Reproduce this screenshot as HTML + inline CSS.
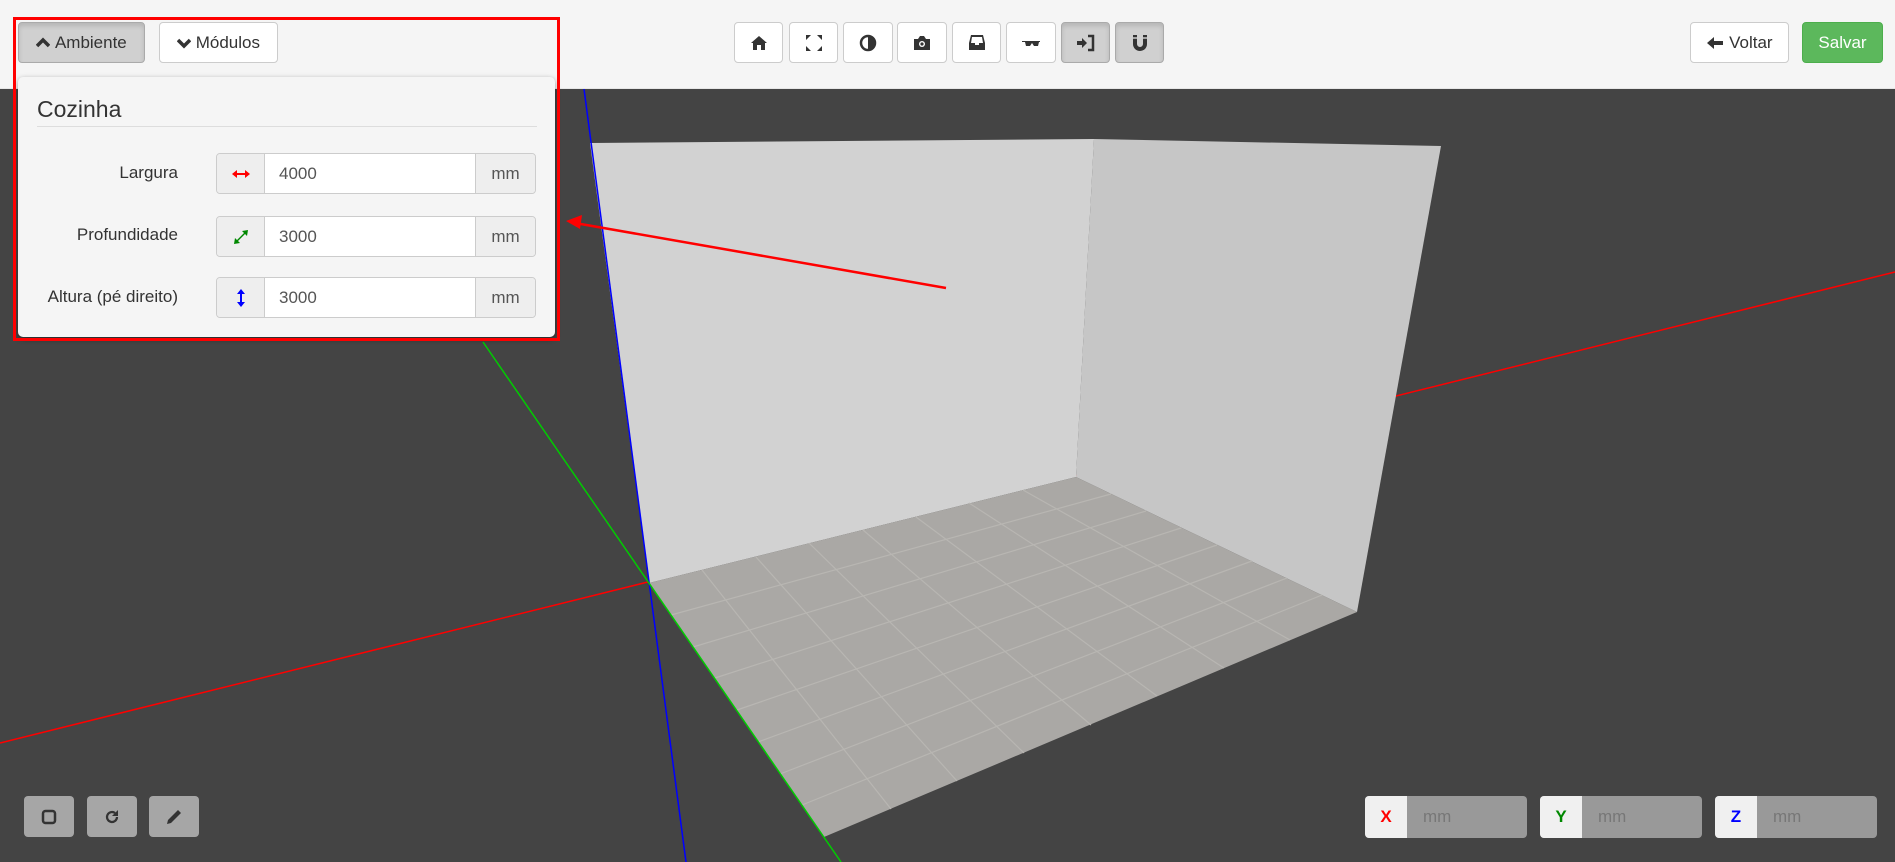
<!DOCTYPE html>
<html><head><meta charset="utf-8"><style>
*{box-sizing:border-box;margin:0;padding:0}
body{width:1895px;height:862px;overflow:hidden;background:#444;font-family:"Liberation Sans",sans-serif;position:relative;color:#333}
.hdr{position:absolute;left:0;top:0;width:1895px;height:89px;background:#f5f5f5;border-bottom:1px solid #e6e6e6}
.btn{position:absolute;top:22px;height:41px;border:1px solid #ccc;border-radius:4px;background:#fff;display:flex;align-items:center;justify-content:center;font-size:17px;color:#333}
.act{background:#d0d0d0;border-color:#aaa;box-shadow:inset 0 3px 5px rgba(0,0,0,.125)}
.panel{position:absolute;left:18px;top:77px;width:537px;height:260px;background:#f5f5f5;border-radius:5px;box-shadow:0 2px 6px rgba(0,0,0,.4)}
.lbl{position:absolute;right:377px;font-size:17px;color:#333;text-align:right;white-space:nowrap}
.grp{position:absolute;left:198px;width:320px;height:41px;border:1px solid #ccc;border-radius:4px;display:flex;overflow:hidden}
.ad{width:48px;background:#eee;border-right:1px solid #ccc;display:flex;align-items:center;justify-content:center}
.inp{flex:1;background:#fff;font-size:17px;color:#555;padding-left:14px;display:flex;align-items:center}
.mm{width:60px;background:#eee;border-left:1px solid #ccc;display:flex;align-items:center;justify-content:center;font-size:17px;color:#555}
.bb{position:absolute;top:796px;width:50px;height:41px;background:#a6a6a6;border-radius:4px;display:flex;align-items:center;justify-content:center}
.cg{position:absolute;top:796px;width:162px;height:42px;border-radius:4px;background:#999;display:flex;overflow:hidden}
.cg .l{width:42px;background:#f0f0f0;display:flex;align-items:center;justify-content:center;font-weight:bold;font-size:17px}
.cg .r{flex:1;color:#777;font-size:17px;padding-left:16px;display:flex;align-items:center}
</style></head><body>
<svg width="1895" height="862" style="position:absolute;left:0;top:0">
<line x1="0" y1="743" x2="1895" y2="272" stroke="#f00" stroke-width="1.5"/>
<polygon points="590,143 1094,139 1076,477 649,583" fill="#d2d2d2"/>
<polygon points="1094,139 1441,146 1357,612 1076,477" fill="#c6c6c6"/>
<polygon points="649,583 1076,477 1357,612 824,837" fill="#aaa8a5"/>
<g stroke="#b8b6b2" stroke-width="1.2">
<line x1="671" y1="615" x2="1111" y2="494"/><line x1="693" y1="647" x2="1146" y2="511"/><line x1="715" y1="678" x2="1181" y2="528"/><line x1="737" y1="710" x2="1217" y2="545"/><line x1="758" y1="742" x2="1252" y2="561"/><line x1="780" y1="774" x2="1287" y2="578"/><line x1="802" y1="805" x2="1322" y2="595"/>
<line x1="702" y1="570" x2="891" y2="809"/><line x1="756" y1="557" x2="957" y2="781"/><line x1="809" y1="543" x2="1024" y2="753"/><line x1="863" y1="530" x2="1091" y2="725"/><line x1="916" y1="517" x2="1157" y2="696"/><line x1="969" y1="503" x2="1224" y2="668"/><line x1="1023" y1="490" x2="1290" y2="640"/>
</g>
<line x1="584" y1="89" x2="686" y2="862" stroke="#00f" stroke-width="1.5"/>
<line x1="483" y1="342" x2="841" y2="862" stroke="#0c0" stroke-width="1.5"/>
<line x1="946" y1="288" x2="575" y2="223" stroke="#f00" stroke-width="2.5"/>
<polygon points="566,221 582,215 580,229" fill="#f00"/>
</svg>
<div class="hdr"></div>
<div class="btn act" style="left:18px;width:127px"><svg width="14" height="12" viewBox="0 0 14 12"><path d="M1 9 7 3 13 9" stroke="#333" stroke-width="3.5" fill="none"/></svg>&nbsp;Ambiente</div>
<div class="btn" style="left:159px;width:119px"><svg width="14" height="12" viewBox="0 0 14 12"><path d="M1 3 7 9 13 3" stroke="#333" stroke-width="3.5" fill="none"/></svg>&nbsp;Módulos</div>
<div class="btn" style="left:734px;width:49px"><svg width="18" height="16" viewBox="0 0 18 16"><path d="M9 1 1 8h2v7h4v-5h4v5h4V8h2z" fill="#333"/></svg></div>
<div class="btn" style="left:789px;width:49px"><svg width="18" height="18" viewBox="0 0 18 18" fill="#333"><path d="M1 1h5L1 6zM17 1h-5l5 5zM1 17h5L1 12zM17 17h-5l5-5z"/></svg></div>
<div class="btn" style="left:843px;width:50px"><svg width="18" height="18" viewBox="0 0 18 18"><circle cx="9" cy="9" r="7" stroke="#333" stroke-width="2.5" fill="none"/><path d="M9 2a7 7 0 0 1 0 14z" fill="#333"/></svg></div>
<div class="btn" style="left:897px;width:50px"><svg width="18" height="16" viewBox="0 0 18 16"><path d="M1 4h4l2-3h4l2 3h4v11H1z" fill="#333"/><circle cx="9" cy="9" r="3" fill="#fff"/><circle cx="9" cy="9" r="1.6" fill="#333"/></svg></div>
<div class="btn" style="left:952px;width:49px"><svg width="18" height="17" viewBox="0 0 18 17"><path d="M3 1h12l2 8v7H1V9zM4 3 3 9h4v2h4V9h4l-1-6z" fill="#333" fill-rule="evenodd"/></svg></div>
<div class="btn" style="left:1006px;width:50px"><svg width="20" height="10" viewBox="0 0 20 10" fill="#333"><path d="M1 3h18v1l-1 0-1 4h-4l-2-3-2 3H5L4 4 1 4z"/></svg></div>
<div class="btn act" style="left:1061px;width:49px"><svg width="20" height="18" viewBox="0 0 20 18"><path d="M1 7h5V4l5 5-5 5v-3H1z" fill="#333"/><path d="M12 2h5v14h-5" stroke="#333" stroke-width="2.5" fill="none"/></svg></div>
<div class="btn act" style="left:1115px;width:49px"><svg width="16" height="18" viewBox="0 0 16 18"><path d="M3 1v9a5 5 0 0 0 10 0V1" stroke="#333" stroke-width="4" fill="none"/><path d="M1 4h4M11 4h4" stroke="#c9c9c9" stroke-width="1.5"/></svg></div>
<div class="btn" style="left:1690px;width:99px"><svg width="18" height="14" viewBox="0 0 18 14"><path d="M1 7 8 1v4h9v4H8v4z" fill="#333"/></svg>&nbsp;Voltar</div>
<div class="btn" style="left:1802px;width:81px;background:#5cb85c;border-color:#4cae4c;color:#fff">Salvar</div>
<div class="panel">
<div style="position:absolute;left:19px;top:19px;font-size:23px;color:#333">Cozinha</div>
<div style="position:absolute;left:19px;top:49px;width:500px;border-top:1px solid #ddd"></div>
<div class="lbl" style="top:86px">Largura</div>
<div class="grp" style="top:76px"><div class="ad"><svg width="18" height="8" viewBox="0 0 18 8"><path d="M0 4 5 0v3h8V0l5 4-5 4V5H5v3z" fill="#f00"/></svg></div><div class="inp">4000</div><div class="mm">mm</div></div>
<div class="lbl" style="top:148px">Profundidade</div>
<div class="grp" style="top:139px"><div class="ad"><svg width="14" height="14" viewBox="0 0 14 14"><path d="M14 0 13 6 11 4 4 11l2 2-6 1 1-6 2 2 7-7-2-2z" fill="#080"/></svg></div><div class="inp">3000</div><div class="mm">mm</div></div>
<div class="lbl" style="top:210px">Altura (pé direito)</div>
<div class="grp" style="top:200px"><div class="ad"><svg width="8" height="18" viewBox="0 0 8 18"><path d="M4 0 8 5H5v8h3l-4 5-4-5h3V5H0z" fill="#00f"/></svg></div><div class="inp">3000</div><div class="mm">mm</div></div>
</div>
<div style="position:absolute;left:13px;top:17px;width:547px;height:324px;border:3px solid #f00"></div>
<div class="bb" style="left:24px"><svg width="16" height="16" viewBox="0 0 16 16"><rect x="2" y="2" width="12" height="12" rx="2.5" stroke="#333" stroke-width="2.5" fill="none"/></svg></div>
<div class="bb" style="left:87px"><svg width="16" height="16" viewBox="0 0 16 16"><path d="M13 8a5 5 0 1 1-2-4" stroke="#333" stroke-width="2.2" fill="none"/><path d="M14 1v6H8z" fill="#333"/></svg></div>
<div class="bb" style="left:149px"><svg width="18" height="18" viewBox="0 0 18 18"><path d="M2 16l1-4L13 2l3 3L6 15z" fill="#333"/></svg></div>
<div class="cg" style="left:1365px"><div class="l" style="color:#f00">X</div><div class="r">mm</div></div>
<div class="cg" style="left:1540px"><div class="l" style="color:#080">Y</div><div class="r">mm</div></div>
<div class="cg" style="left:1715px"><div class="l" style="color:#00f">Z</div><div class="r">mm</div></div>
</body></html>
